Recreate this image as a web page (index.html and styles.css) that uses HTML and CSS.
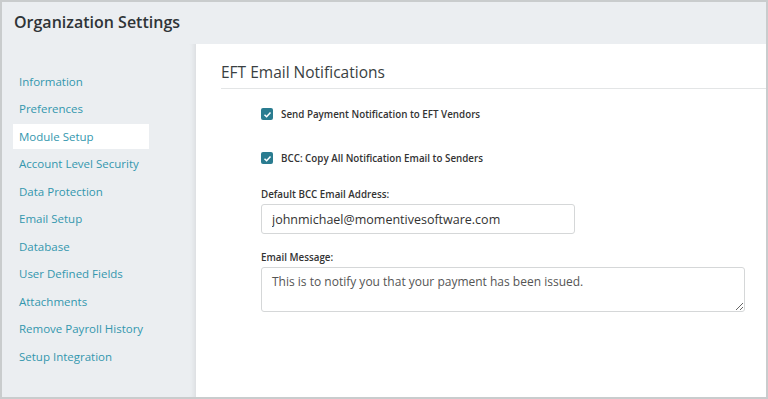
FILE: index.html
```html
<!DOCTYPE html>
<html lang="en">

<head>
    <meta charset="UTF-8">
    <meta name="viewport" content="width=device-width, initial-scale=1.0">
    <link rel="stylesheet" href="styles.css">
</head>

<body>
    <div class="frame">
        <div class="page-header">
            <h1>Organization Settings</h1>
        </div>
        <div class="page-body">
            <ul class="side-nav">
                <li><a href="#">Information</a></li>
                <li><a href="#">Preferences</a></li>
                <li class="active"><a href="#">Module Setup</a></li>
                <li><a href="#">Account Level Security</a></li>
                <li><a href="#">Data Protection</a></li>
                <li><a href="#">Email Setup</a></li>
                <li><a href="#">Database</a></li>
                <li><a href="#">User Defined Fields</a></li>
                <li><a href="#">Attachments</a></li>
                <li><a href="#">Remove Payroll History</a></li>
                <li><a href="#">Setup Integration</a></li>
            </ul>
            <div class="content">
                <h2>EFT Email Notifications</h2>
                <div class="form">
                    <label class="check-row">
                        <span class="check"><svg viewBox="0 0 12 12" width="9" height="9"><path d="M2 6.3 L4.8 9 L10 3.2" fill="none" stroke="#fff" stroke-width="2"/></svg></span>
                        Send Payment Notification to EFT Vendors
                    </label>
                    <label class="check-row last">
                        <span class="check"><svg viewBox="0 0 12 12" width="9" height="9"><path d="M2 6.3 L4.8 9 L10 3.2" fill="none" stroke="#fff" stroke-width="2"/></svg></span>
                        BCC: Copy All Notification Email to Senders
                    </label>
                    <div class="field">
                        <div class="field-label">Default BCC Email Address:</div>
                        <input class="text-input" type="text" value="johnmichael@momentivesoftware.com">
                    </div>
                    <div class="field">
                        <div class="field-label">Email Message:</div>
                        <textarea class="text-area">This is to notify you that your payment has been issued.</textarea>
                    </div>
                </div>
            </div>
        </div>
    </div>
</body>

</html>
```

FILE: styles.css
```css
html,
body {
    margin: 0;
    height: 100%;
}

body {
    font-family: "Open Sans", "Noto Sans", sans-serif;
    color: #333;
    background: #fff;
}

.frame {
    box-sizing: border-box;
    height: 399px;
    border: 2px solid #c9cccd;
    margin-bottom: 1px;
    display: flex;
    flex-direction: column;
    background: #ebeef1;
}

.page-header {
    height: 42px;
    padding-left: 12px;
    display: flex;
    align-items: center;
}

.page-header h1 {
    margin: 0;
    font-size: 16px;
    font-weight: 600;
    color: #2f3437;
    position: relative;
    top: -1px;
}

.page-body {
    flex: 1;
    display: flex;
}

.side-nav {
    list-style: none;
    margin: 0;
    padding: 24.5px 0 0 11px;
    width: 183px;
    box-shadow: inset -6px 0 5px -4px rgba(0, 0, 0, 0.07);
}

.side-nav li {
    width: 136px;
    height: 25px;
    margin-bottom: 2.5px;
    display: flex;
    align-items: center;
    white-space: nowrap;
}

.side-nav li.active {
    background: #fff;
}

.side-nav a {
    padding-left: 6px;
    font-size: 11.5px;
    color: #3397ae;
    text-decoration: none;
}

.content {
    flex: 1;
    background: #fff;
    padding: 17px 0 0 25px;
}

.content h2 {
    margin: 0;
    font-size: 15.5px;
    font-weight: 400;
    color: #3a3f42;
    padding-bottom: 5px;
    border-bottom: 1px solid #e3e5e6;
}

.form {
    padding: 15px 0 0 40px;
}

.check-row {
    display: flex;
    align-items: center;
    gap: 8px;
    font-size: 9.8px;
    font-weight: 600;
    color: #333;
    height: 20px;
    margin-bottom: 24px;
}

.check-row.last {
    margin-bottom: 20px;
}

.check {
    width: 12px;
    height: 12px;
    border-radius: 2px;
    background: #2a7c90;
    display: flex;
    align-items: center;
    justify-content: center;
}

.field {
    margin-bottom: 17px;
}

.field-label {
    font-size: 9.8px;
    font-weight: 600;
    color: #333;
    height: 14px;
    line-height: 14px;
    margin-bottom: 2px;
}

.text-input,
.text-area {
    box-sizing: border-box;
    font-family: "Open Sans", "Noto Sans", sans-serif;
    border: 1px solid #d5d7d8;
    border-radius: 3px;
    padding: 0 10px;
    display: block;
}

.text-input {
    width: 314px;
    height: 30px;
    font-size: 12.5px;
    color: #333;
}

.text-area {
    width: 484px;
    height: 45px;
    font-size: 12px;
    color: #555;
    padding-top: 5px;
    resize: vertical;
}
```
